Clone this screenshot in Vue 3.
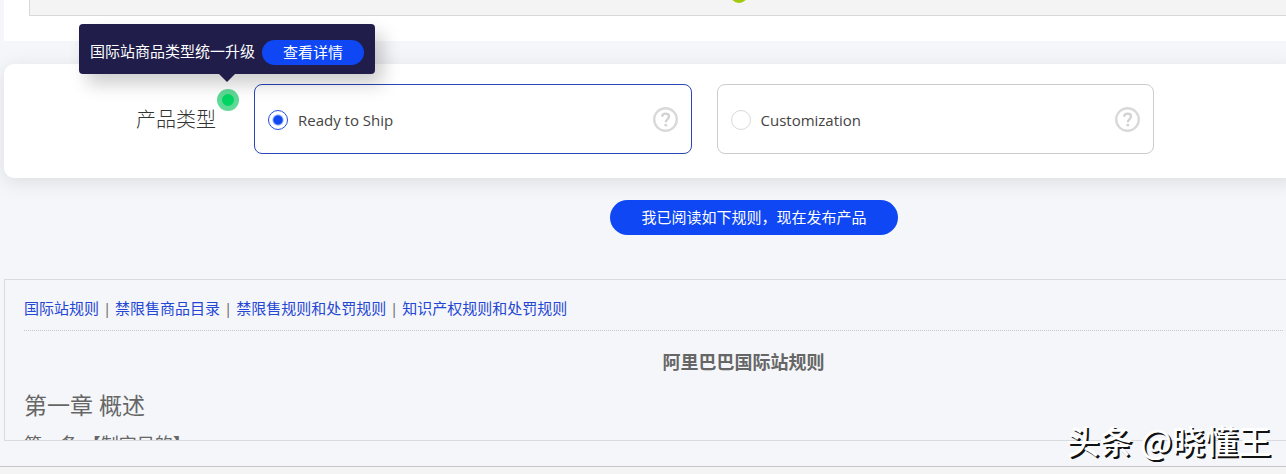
<script setup>
import { ref } from 'vue'

const selected = ref('rts')
const options = [
  { value: 'rts', label: 'Ready to Ship' },
  { value: 'custom', label: 'Customization' },
]
const links = ['国际站规则', '禁限售商品目录', '禁限售规则和处罚规则', '知识产权规则和处罚规则']
</script>

<template>
  <div class="page">
    <header class="top">
      <div class="top-panel"><span class="top-dot"></span></div>
    </header>

    <section class="card">
      <div class="label-col">
        <h2 id="type-label" class="label">产品类型</h2>
        <div class="anchor">
          <span class="pulse"></span>
          <div class="tip" role="tooltip">
            <span>国际站商品类型统一升级</span>
            <button type="button" class="tip-btn">查看详情</button>
          </div>
        </div>
      </div>
      <div class="options" role="radiogroup" aria-labelledby="type-label">
        <label
          v-for="o in options"
          :key="o.value"
          class="option"
          :class="{ active: selected === o.value }"
        >
          <input v-model="selected" type="radio" name="product-type" class="radio" :value="o.value" />
          <span class="option-text">{{ o.label }}</span>
          <svg class="help" viewBox="0 0 26 26" width="26" height="26" aria-hidden="true">
            <circle cx="12.5" cy="12.5" r="11.3" fill="none" stroke="#d9d9d9" stroke-width="2.4" />
            <path
              d="M9.2 9.7C9.2 7.6 10.6 6.6 12.6 6.6C14.7 6.6 16 7.8 16 9.6C16 12.1 12.8 12 12.8 15.2"
              fill="none"
              stroke="#d2d2d2"
              stroke-width="2.3"
            />
            <circle cx="12.8" cy="18.2" r="1.4" fill="#d2d2d2" />
          </svg>
        </label>
      </div>
    </section>

    <div class="action">
      <button type="button" class="publish">我已阅读如下规则，现在发布产品</button>
    </div>

    <section class="rules">
      <nav class="links">
        <template v-for="(l, i) in links" :key="l">
          <template v-if="i"> | </template><a href="#">{{ l }}</a>
        </template>
      </nav>
      <h3 class="title">阿里巴巴国际站规则</h3>
      <h4 class="chapter">第一章 概述</h4>
      <p class="clause">第一条 【制定目的】</p>
    </section>

    <footer class="footer"></footer>
    <div class="mark">头条 @晓懂王</div>
  </div>
</template>

<style>
body {
  margin: 0;
  background: #f5f6f9;
}
</style>

<style scoped>
.page {
  position: relative;
  overflow: hidden;
  padding-left: 4px;
  font-family: "Open Sans", "Noto Sans CJK SC", sans-serif;
  font-size: 15px;
  line-height: 20px;
  color: #333;
}
button {
  border: 0;
  padding: 0 0 2px;
  font: inherit;
  color: #fff;
  background: #0f47f5;
  cursor: pointer;
}
.top {
  padding: 0 0 25px 25px;
  background: #fff;
}
.top-panel {
  box-sizing: border-box;
  position: relative;
  height: 16px;
  border: solid #d8d8d8;
  border-width: 0 0 1px 1px;
  background: #f4f4f4;
}
.top-dot {
  position: absolute;
  left: 700px;
  top: -15px;
  width: 18px;
  height: 18px;
  border-radius: 50%;
  background: #a2ca0c;
}
.card {
  display: flex;
  margin-top: 23px;
  margin-right: -12px;
  padding: 20px 144px 24px 0;
  border-radius: 10px;
  background: #fff;
  box-shadow: 0 4px 20px rgba(0, 0, 0, 0.1);
}
.label-col {
  display: flex;
  flex: 0 0 118px;
  padding-left: 132px;
}
.label {
  margin: 0;
  padding-top: 21px;
  font-size: 20px;
  font-weight: 300;
  line-height: 30px;
}
.anchor {
  position: relative;
  width: 24px;
  height: 24px;
  padding-top: 5px;
}
.pulse {
  display: block;
  box-sizing: border-box;
  width: 22px;
  height: 22px;
  border: 5px solid #5fd996;
  border-radius: 50%;
  background: #00d563;
  margin-left: 1px;
}
.tip {
  position: absolute;
  z-index: 2;
  left: -137px;
  bottom: 39px;
  box-sizing: border-box;
  display: flex;
  align-items: center;
  gap: 7px;
  width: 296px;
  height: 50px;
  padding: 6px 11px 0;
  border-radius: 4px;
  white-space: nowrap;
  color: #fff;
  background: #201d4a;
  box-shadow: 8px 10px 18px rgba(0, 0, 0, 0.2);
}
.tip > span {
  padding-bottom: 2px;
}
.tip::after {
  content: "";
  position: absolute;
  left: 140px;
  top: 50px;
  border: solid transparent;
  border-width: 8px 8px 0;
  border-top-color: #201d4a;
}
.tip-btn {
  width: 102px;
  height: 25px;
  padding: 0;
  border-radius: 13px;
}
.options {
  display: grid;
  flex: 1;
  grid-template-columns: 1fr 1fr;
  gap: 25px;
}
.option {
  box-sizing: border-box;
  display: flex;
  align-items: center;
  height: 70px;
  padding: 2px 12px 0 13px;
  border: 1px solid #ccc;
  border-radius: 8px;
}
.option.active {
  border-color: #2a46b8;
}
.radio {
  appearance: none;
  box-sizing: border-box;
  width: 20px;
  height: 20px;
  margin: 0 10px 0 0;
  border: 1px solid #d9d9d9;
  border-radius: 50%;
  background: #fff;
}
.radio:checked {
  border-color: #1f4fe0;
  background: radial-gradient(circle, #0f47f5 0 4px, #fff 6px);
}
.option-text {
  flex: 1;
  color: #444;
}
.action {
  display: flex;
  justify-content: center;
  padding: 22px 0 44px 218px;
}
.publish {
  width: 288px;
  height: 35px;
  border-radius: 18px;
}
.rules {
  box-sizing: border-box;
  height: 162px;
  overflow: hidden;
  padding: 18px 3px 0 19px;
  border: solid #d9dbdf;
  border-width: 1px 0 1px 1px;
  color: #666;
}
.links {
  padding-bottom: 12px;
  border-bottom: 1px dotted #c8c8c8;
}
.links a {
  color: #2446d4;
  text-decoration: none;
}
.title {
  margin: 0;
  padding: 19px 0 0 180px;
  font-size: 18px;
  line-height: 24px;
  text-align: center;
}
.chapter {
  margin: 15px 0 0;
  font-size: 23px;
  font-weight: 400;
  line-height: 32px;
}
.clause {
  margin: 9px 0 0;
  font-size: 18px;
  line-height: 28px;
}
.footer {
  height: 7px;
  margin: 25px 0 0 -4px;
  border-top: 1px solid #c6c6c6;
  background: #f4f4f4;
}
.mark {
  position: absolute;
  right: 15px;
  bottom: 10px;
  font-family: "Noto Sans CJK SC", sans-serif;
  font-size: 33px;
  font-weight: 500;
  line-height: 48px;
  color: #fff;
  text-shadow: 2px 2px 0 #111;
}
</style>
